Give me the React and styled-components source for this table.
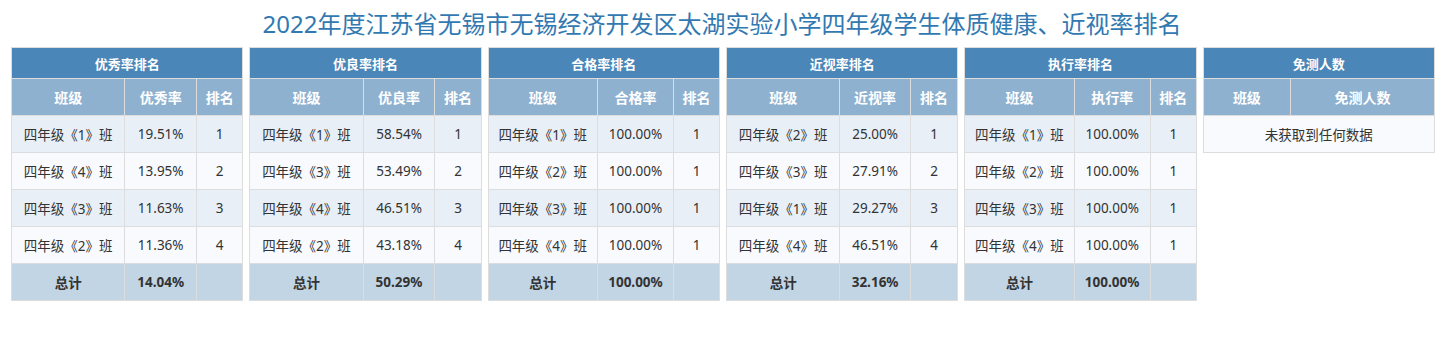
import styled, { createGlobalStyle } from "styled-components";

const GlobalStyle = createGlobalStyle`
    body {
        margin: 0;
        background: #ffffff;
        overflow: hidden;
        font-family: "Noto Sans", "Noto Sans CJK SC", sans-serif;
        color: #333333;
    }
`;

const boards = [
    {
        title: "优秀率排名",
        rateLabel: "优秀率",
        widths: ["49%", "31%", "20%"],
        rows: [
            ["四年级《1》班", "19.51%", "1"],
            ["四年级《4》班", "13.95%", "2"],
            ["四年级《3》班", "11.63%", "3"],
            ["四年级《2》班", "11.36%", "4"],
        ],
        total: "14.04%",
    },
    {
        title: "优良率排名",
        rateLabel: "优良率",
        widths: ["49%", "31%", "20%"],
        rows: [
            ["四年级《1》班", "58.54%", "1"],
            ["四年级《3》班", "53.49%", "2"],
            ["四年级《4》班", "46.51%", "3"],
            ["四年级《2》班", "43.18%", "4"],
        ],
        total: "50.29%",
    },
    {
        title: "合格率排名",
        rateLabel: "合格率",
        widths: ["47.2%", "33%", "19.8%"],
        rows: [
            ["四年级《1》班", "100.00%", "1"],
            ["四年级《2》班", "100.00%", "1"],
            ["四年级《3》班", "100.00%", "1"],
            ["四年级《4》班", "100.00%", "1"],
        ],
        total: "100.00%",
    },
    {
        title: "近视率排名",
        rateLabel: "近视率",
        widths: ["49%", "30.5%", "20.5%"],
        rows: [
            ["四年级《2》班", "25.00%", "1"],
            ["四年级《3》班", "27.91%", "2"],
            ["四年级《1》班", "29.27%", "3"],
            ["四年级《4》班", "46.51%", "4"],
        ],
        total: "32.16%",
    },
    {
        title: "执行率排名",
        rateLabel: "执行率",
        widths: ["47.2%", "33%", "19.8%"],
        rows: [
            ["四年级《1》班", "100.00%", "1"],
            ["四年级《2》班", "100.00%", "1"],
            ["四年级《3》班", "100.00%", "1"],
            ["四年级《4》班", "100.00%", "1"],
        ],
        total: "100.00%",
    },
];

const App = () => {
    return (
        <>
            <GlobalStyle />
            <Page>
                <Title>
                    2022年度江苏省无锡市无锡经济开发区太湖实验小学四年级学生体质健康、近视率排名
                </Title>
                <Boards>
                    {boards.map((board) => (
                        <Column key={board.title}>
                            <Table>
                                <colgroup>
                                    {board.widths.map((w, i) => (
                                        <col key={i} style={{ width: w }} />
                                    ))}
                                </colgroup>
                                <thead>
                                    <tr>
                                        <Caption colSpan={3}>{board.title}</Caption>
                                    </tr>
                                    <tr>
                                        <HeadCell>班级</HeadCell>
                                        <HeadCell>{board.rateLabel}</HeadCell>
                                        <HeadCell>排名</HeadCell>
                                    </tr>
                                </thead>
                                <tbody>
                                    {board.rows.map((row, i) => (
                                        <Row key={i} $odd={i % 2 === 0}>
                                            {row.map((cell, j) => (
                                                <Cell key={j}>{cell}</Cell>
                                            ))}
                                        </Row>
                                    ))}
                                    <TotalRow>
                                        <Cell>总计</Cell>
                                        <Cell>{board.total}</Cell>
                                        <Cell></Cell>
                                    </TotalRow>
                                </tbody>
                            </Table>
                        </Column>
                    ))}
                    <Column>
                        <Table>
                            <colgroup>
                                <col style={{ width: "37.8%" }} />
                                <col style={{ width: "62.2%" }} />
                            </colgroup>
                            <thead>
                                <tr>
                                    <Caption colSpan={2}>免测人数</Caption>
                                </tr>
                                <tr>
                                    <HeadCell>班级</HeadCell>
                                    <HeadCell>免测人数</HeadCell>
                                </tr>
                            </thead>
                            <tbody>
                                <Row $odd={false}>
                                    <Cell colSpan={2}>未获取到任何数据</Cell>
                                </Row>
                            </tbody>
                        </Table>
                    </Column>
                </Boards>
            </Page>
        </>
    );
};

const Page = styled.div`
    padding-left: 8px;
`;

const Title = styled.h1`
    margin: 0;
    height: 47px;
    line-height: 47px;
    text-align: center;
    font-size: 24px;
    font-weight: normal;
    color: #3279b1;
`;

const Boards = styled.div`
    display: grid;
    grid-template-columns: repeat(6, minmax(0, 1fr));
    width: 1430px;
    align-items: start;
`;

const Column = styled.div`
    padding: 0 3px;
    min-width: 0;
`;

const Table = styled.table`
    width: 100%;
    border-collapse: collapse;
    table-layout: fixed;
    font-size: 13.5px;
    text-align: center;
    border: 1px solid #dddddd;
`;

const Caption = styled.th`
    height: 30px;
    padding: 0;
    background-color: #4a86b8;
    color: #ffffff;
    font-weight: bold;
    font-size: 13px;
    border: 1px solid #dddddd;
`;

const HeadCell = styled.th`
    height: 36px;
    padding: 0;
    background-color: #8eb1d0;
    color: #ffffff;
    font-weight: bold;
    font-size: 14px;
    border: 1px solid #dddddd;
`;

const Row = styled.tr`
    background-color: ${(props) => (props.$odd ? "#e8eff7" : "#f8fafe")};
`;

const TotalRow = styled.tr`
    background-color: #c2d5e4;
    font-weight: bold;
`;

const Cell = styled.td`
    height: 36px;
    padding: 0;
    white-space: nowrap;
    overflow: hidden;
    border: 1px solid #dddddd;
`;

export default App;
